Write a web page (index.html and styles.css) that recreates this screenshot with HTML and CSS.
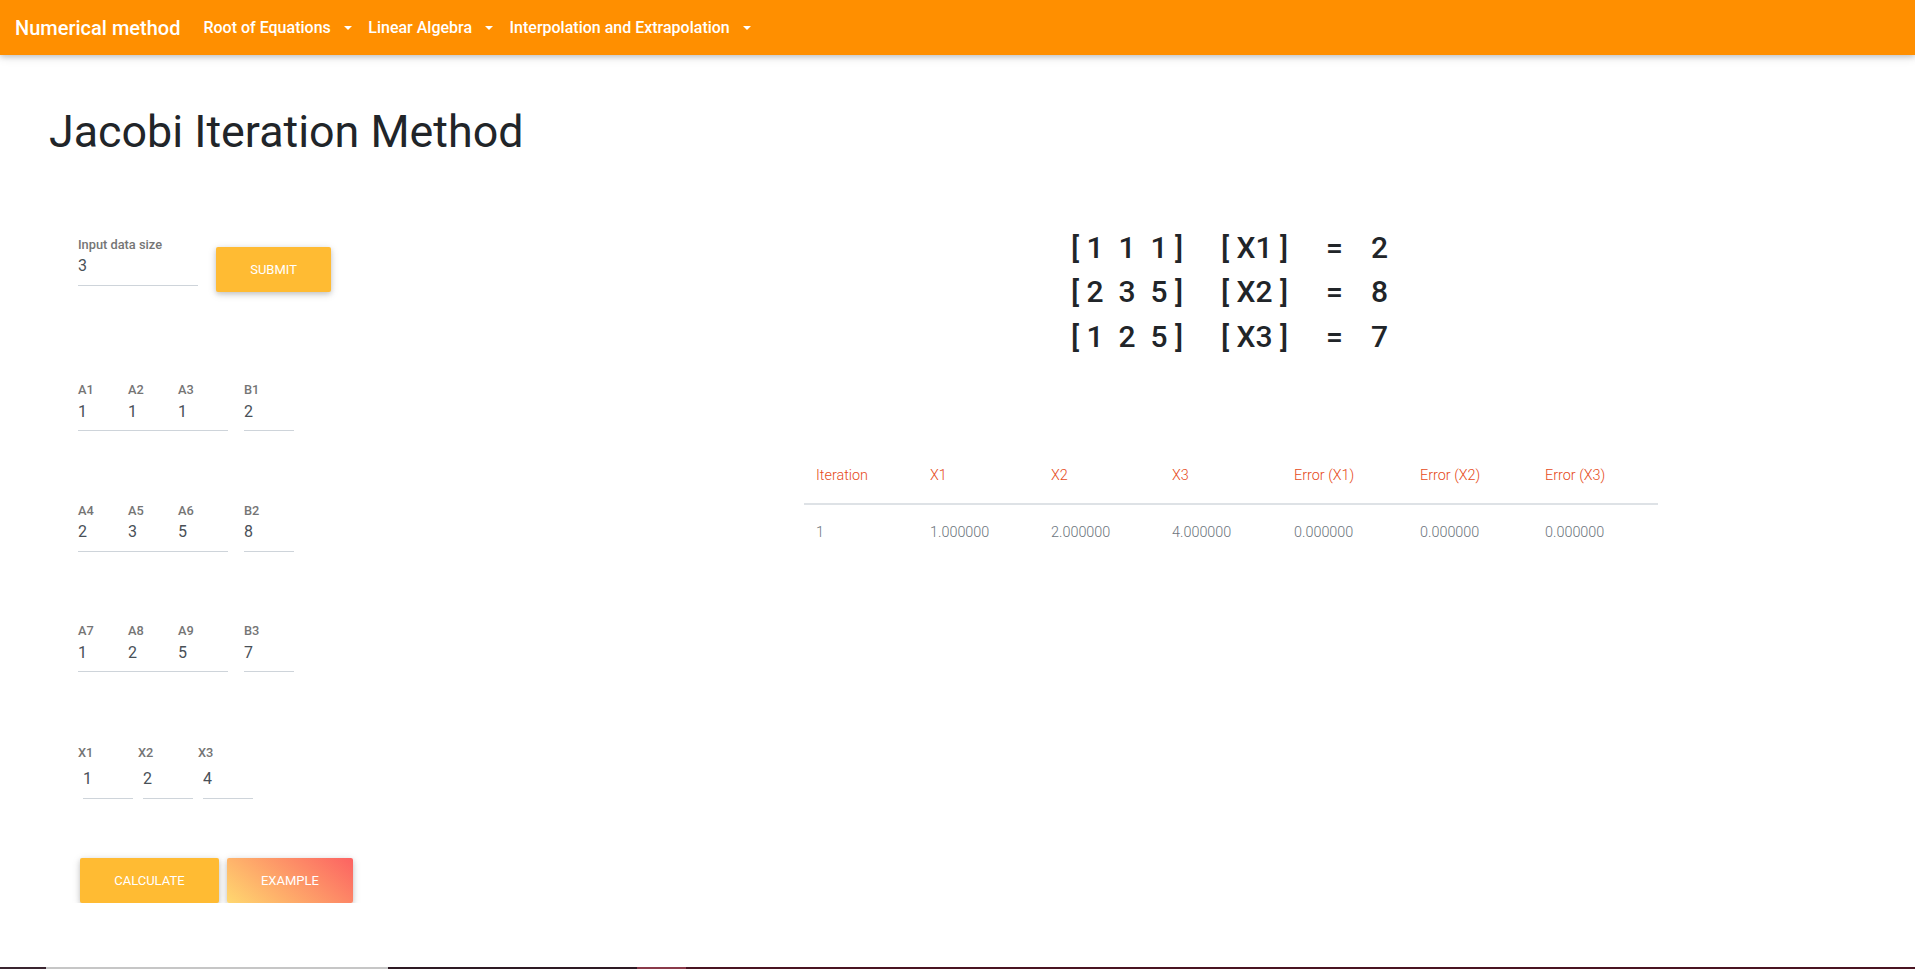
FILE: index.html
```html
<!DOCTYPE html>
<html lang="en">
<head>
<meta charset="utf-8">
<title>Jacobi Iteration Method</title>
<link rel="stylesheet" href="styles.css">
</head>
<body>
<nav class="navbar">
  <span class="brand">Numerical method</span>
  <ul class="nav">
    <li class="nav-item"><span class="nav-link">Root of Equations<span class="caret"></span></span></li>
    <li class="nav-item"><span class="nav-link">Linear Algebra<span class="caret"></span></span></li>
    <li class="nav-item"><span class="nav-link">Interpolation and Extrapolation<span class="caret"></span></span></li>
  </ul>
</nav>
<main class="page">
  <h1 class="title">Jacobi Iteration Method</h1>
  <div class="content">
    <section class="form">
      <div class="size-row">
        <div class="field">
          <label class="field-label">Input data size</label>
          <input class="field-input input-size" value="3">
        </div>
        <button class="btn btn-warning btn-submit">Submit</button>
      </div>

      <div class="matrix-row">
        <div class="field"><label class="field-label">A1</label><input class="field-input input-cell" value="1"></div>
        <div class="field"><label class="field-label">A2</label><input class="field-input input-cell" value="1"></div>
        <div class="field"><label class="field-label">A3</label><input class="field-input input-cell" value="1"></div>
        <div class="field field-b"><label class="field-label">B1</label><input class="field-input input-cell" value="2"></div>
      </div>
      <div class="matrix-row">
        <div class="field"><label class="field-label">A4</label><input class="field-input input-cell" value="2"></div>
        <div class="field"><label class="field-label">A5</label><input class="field-input input-cell" value="3"></div>
        <div class="field"><label class="field-label">A6</label><input class="field-input input-cell" value="5"></div>
        <div class="field field-b"><label class="field-label">B2</label><input class="field-input input-cell" value="8"></div>
      </div>
      <div class="matrix-row">
        <div class="field"><label class="field-label">A7</label><input class="field-input input-cell" value="1"></div>
        <div class="field"><label class="field-label">A8</label><input class="field-input input-cell" value="2"></div>
        <div class="field"><label class="field-label">A9</label><input class="field-input input-cell" value="5"></div>
        <div class="field field-b"><label class="field-label">B3</label><input class="field-input input-cell" value="7"></div>
      </div>

      <div class="x-row">
        <div class="field field-x"><label class="field-label">X1</label><input class="field-input input-cell" value="1"></div>
        <div class="field field-x"><label class="field-label">X2</label><input class="field-input input-cell" value="2"></div>
        <div class="field field-x"><label class="field-label">X3</label><input class="field-input input-cell" value="4"></div>
      </div>

      <div class="actions">
        <button class="btn btn-warning btn-calc">Calculate</button>
        <button class="btn btn-peach btn-example">Example</button>
      </div>
    </section>

    <section class="result">
      <div class="equations">
        <div>[ 1  1  1 ]</div><div>[ X1 ]</div><div>=</div><div>2</div>
        <div>[ 2  3  5 ]</div><div>[ X2 ]</div><div>=</div><div>8</div>
        <div>[ 1  2  5 ]</div><div>[ X3 ]</div><div>=</div><div>7</div>
      </div>

      <table class="table">
        <colgroup>
          <col class="c-iter"><col class="c-x"><col class="c-x"><col class="c-x3"><col class="c-e1"><col class="c-e2"><col class="c-e3">
        </colgroup>
        <thead>
          <tr><th>Iteration</th><th>X1</th><th>X2</th><th>X3</th><th>Error (X1)</th><th>Error (X2)</th><th>Error (X3)</th></tr>
        </thead>
        <tbody>
          <tr><td>1</td><td>1.000000</td><td>2.000000</td><td>4.000000</td><td>0.000000</td><td>0.000000</td><td>0.000000</td></tr>
        </tbody>
      </table>
    </section>
  </div>
</main>
<div class="screen-edge"></div>
</body>
</html>
```

FILE: styles.css
```css
* { box-sizing: border-box; }

html, body {
  margin: 0;
  padding: 0;
  background: #fff;
  font-family: Roboto, "Liberation Sans", Arial, sans-serif;
  color: #212529;
  overflow: hidden;
}

/* ---------- navbar ---------- */
.navbar {
  position: relative;
  z-index: 2;
  display: flex;
  align-items: center;
  height: 55px;
  padding: 0 16px 0 15px;
  background: #ff8f00;
  box-shadow: 0 2px 5px 0 rgba(0, 0, 0, .16), 0 2px 10px 0 rgba(0, 0, 0, .12);
}

.brand {
  font-size: 20px;
  line-height: 30px;
  font-weight: 500;
  color: #fff;
  margin-right: 15px;
}

.nav {
  display: flex;
  list-style: none;
  margin: 0;
  padding: 0;
}

.nav-link {
  display: flex;
  align-items: center;
  padding: 8px 8.5px 8px 8px;
  font-size: 16px;
  line-height: 24px;
  font-weight: 500;
  color: #fff;
}

.caret {
  display: inline-block;
  width: 0;
  height: 0;
  margin-left: 13px;
  border-top: .3em solid #fff;
  border-left: .3em solid transparent;
  border-right: .3em solid transparent;
}

/* ---------- page ---------- */
.page {
  padding-left: 49px;
}

.title {
  margin: 49.6px 0 0;
  font-size: 44.8px;
  line-height: 54px;
  font-weight: 400;
  color: #212529;
}

.content {
  display: flex;
  margin-top: 70.3px;
}

/* ---------- form ---------- */
.form {
  width: 498px;
  flex: none;
  padding-left: 29px;
  padding-top: 7.8px;
}

.field {
  display: flex;
  flex-direction: column;
  align-items: flex-start;
}

.field-label {
  font-size: 12.8px;
  line-height: 16px;
  font-weight: 500;
  color: #757575;
  margin-bottom: 1.5px;
}

.field-input {
  display: block;
  height: 24px;
  margin: 0;
  padding: 0 0 6.5px;
  box-sizing: content-box;
  border: 0;
  border-bottom: 1px solid #ced4da;
  border-radius: 0;
  background: transparent;
  outline: none;
  font-family: Roboto, "Liberation Sans", Arial, sans-serif;
  font-size: 16px;
  line-height: 24px;
  color: #495057;
}

.input-size { width: 120px; }
.input-cell { width: 50px; }

.size-row {
  display: flex;
  align-items: flex-start;
}

.matrix-row {
  display: flex;
  margin-top: 71.5px;
}

.size-row + .matrix-row {
  margin-top: 90.6px;
}

.field-b {
  margin-left: 16px;
}

.x-row {
  display: flex;
  margin-top: 72.6px;
}

.field-x .field-input {
  margin: 5px;
}

.actions {
  display: flex;
  margin-top: 54.3px;
}

/* ---------- buttons ---------- */
.btn {
  display: inline-block;
  margin: 0;
  padding: 12.5px 34.2px;
  border: 0;
  border-radius: 2px;
  font-family: Roboto, "Liberation Sans", Arial, sans-serif;
  font-size: 13px;
  line-height: 19.5px;
  font-weight: 400;
  text-transform: uppercase;
  color: #fff;
  cursor: pointer;
  box-shadow: 0 2px 5px 0 rgba(0, 0, 0, .16), 0 2px 10px 0 rgba(0, 0, 0, .12);
}

.btn-warning { background: #ffbb33; }
.btn-peach { background: linear-gradient(40deg, #ffd86f, #fc6262); }

.btn-submit { margin-left: 18px; margin-top: 10.6px; }
.btn-calc { margin-left: 2px; }
.btn-example { margin-left: 8px; }

/* ---------- results ---------- */
.result {
  flex: 1;
  display: flex;
  flex-direction: column;
  align-items: center;
}

.equations {
  display: grid;
  grid-template-columns: 150px 105px 45px 20px;
  margin-top: -3.3px;
  font-size: 30px;
  line-height: 44.5px;
  font-weight: 500;
  color: #212529;
  white-space: pre;
}

.table {
  margin-top: 88.4px;
  width: 854px;
  table-layout: fixed;
  border-collapse: collapse;
}

.c-iter { width: 114px; }
.c-x { width: 121px; }
.c-x3 { width: 122px; }
.c-e1 { width: 126px; }
.c-e2 { width: 125px; }
.c-e3 { width: 125px; }

.table th,
.table td {
  padding: 17.6px 12px 16px;
  font-size: 14.4px;
  line-height: 21.6px;
  font-weight: 300;
  text-align: left;
}

.table th {
  color: #e64a19;
  border-bottom: 2px solid #dee2e6;
}

.table td {
  color: #6c757d;
}

/* thin strip of the screen below the window */
.screen-edge {
  position: fixed;
  left: 0;
  right: 0;
  bottom: 0;
  height: 2px;
  background: linear-gradient(to right, #3a2530 0 46px, #c6c6c6 46px 388px, #2e1a24 388px 637px, #8a3a4a 637px 686px, #4a1422 686px);
}
```
